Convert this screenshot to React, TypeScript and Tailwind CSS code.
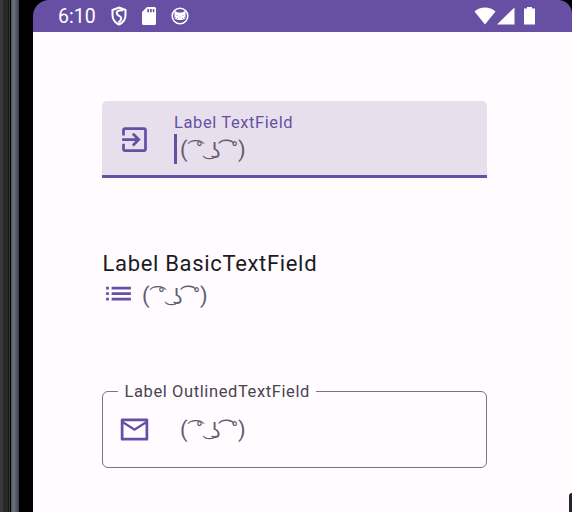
import type { ReactNode } from "react";

function Icon({ children, className = "" }: { children: ReactNode; className?: string }) {
  return (
    <svg viewBox="0 0 24 24" className={"h-[33px] w-[33px] shrink-0 fill-[#6750a4] " + className}>
      {children}
    </svg>
  );
}

function Face() {
  return (
    <span className="flex h-[33px] w-[66px] text-[22px] leading-[33px] whitespace-pre text-[#625b71]">
      <span className="w-[16px] tracking-[-4.5px]">{"( ͡"}</span>
      <span className="-mt-px w-[14px] text-[18px] tracking-[-3.7px]">{"° ͜"}</span>
      <span className="w-[21.5px] pt-px pl-px font-['Noto_Sans',sans-serif] text-[21px] tracking-[1px]">{"ʖ ͡"}</span>
      <span className="-mt-px w-[6.7px] text-[18px]">°</span>
      <span className="w-[8px]">)</span>
    </span>
  );
}

function StatusBar() {
  return (
    <header className="flex h-8 items-center rounded-tl-[16px] rounded-tr-[14px] bg-[#6750a4] pl-[25px] text-white">
      <span className="w-[52px] pt-[2px] text-[19.5px] leading-[30px]">6:10</span>
      <svg viewBox="0 0 18 20" className="h-5 w-[18px] fill-none stroke-white stroke-2">
        <path d="M9 1.5 L15.5 4 V9 C15.5 13.5 12.8 16.8 9 18.5 C5.2 16.8 2.5 13.5 2.5 9 V4 Z" />
        <path d="M13 4.5 C9 3.5 6 5.5 7 8 C8 10 11 10 11.3 12.2 C11.5 14.5 9.5 15.5 8.5 16.5" />
      </svg>
      <svg viewBox="0 0 14 18" className="ml-[14px] h-[18px] w-[14px] fill-white">
        <path fillRule="evenodd" d="M5 0 H12.5 Q14 0 14 1.5 V16.5 Q14 18 12.5 18 H1.5 Q0 18 0 16.5 V5 Z M5.3 2 V5.3 H7 V2 Z M8 2 V5.3 H9.7 V2 Z M10.8 2 V5.3 H12.3 V2 Z" />
      </svg>
      <svg viewBox="0 0 18 18" className="ml-[15px] h-[18px] w-[18px]">
        <circle cx="9" cy="9" r="7.8" className="fill-none stroke-white stroke-[1.6]" />
        <path className="fill-white" d="M3.5 3.5 L6.7 5.5 H11.3 L14.5 3.5 V8 V11 C13 13.7 5 13.7 3.5 11 Z" />
        <path className="fill-[#a596cb]" d="M5.5 8h1v1h-1z M11.5 8h1v1h-1z M8.5 9.5h1v1h-1z M6 11h1v1h-1z M11 11h1v1h-1z M4 10h1v1h-1z M13 10h1v1h-1z" />
      </svg>
      <svg viewBox="0 0 62 20" className="ml-auto mr-[36px] h-5 w-[62px] fill-white">
        <path d="M0.5 5.5 C6 .1 16 .1 21.5 5.5 L11 18.5 Z" />
        <path d="M23 18.5 L40.5 1.5 V18.5 Z" />
        <path d="M50 2.5 H53 V1 H58 V2.5 H61 V18.5 H50 Z" />
      </svg>
    </header>
  );
}

export default function App() {
  return (
    <div className="flex h-[512px] w-[572px] overflow-hidden bg-black font-['Roboto',sans-serif]">
      <aside className="flex w-[33px] shrink-0">
        <div className="w-[3px] bg-[#3b3a3a]" />
        <div className="w-[5px] bg-[#292929]" />
        <div className="w-px bg-[#171717]" />
        <div className="w-px bg-[#383839]" />
        <div className="w-px bg-black" />
        <div className="w-[3px] bg-linear-to-r from-[#4a4d53] to-[#777c85]" />
        <div className="w-[5px] bg-linear-to-r from-[#696f79] to-[#3b4049]" />
      </aside>
      <main className="relative min-w-0 flex-1">
        <StatusBar />
        <div className="flex h-[480px] flex-col bg-[#fffbff] pt-[69px] pl-[69px]">
          <section className="flex h-[77px] w-[385px] items-center rounded-t-[5px] border-b-[3px] border-[#6750a4] bg-[#e7e0ec] pl-4">
            <Icon className="mt-[3px]">
              <path d="M10.09 15.59 11.5 17l5-5-5-5-1.41 1.41L12.67 11H3v2h9.67l-2.58 2.59zM19 3H5c-1.11 0-2 .9-2 2v4h2V5h14v14H5v-4H3v4c0 1.1.89 2 2 2h14c1.1 0 2-.9 2-2V5c0-1.1-.9-2-2-2z" />
            </Icon>
            <div className="ml-[23px] h-[52px]">
              <div className="h-[22px] text-[16.5px] leading-[22px] tracking-[0.6px] text-[#6750a4]">Label TextField</div>
              <div className="flex h-[30px] items-center">
                <span className="h-[30px] w-[3px] bg-[#6750a4]" />
                <span className="ml-[3px]"><Face /></span>
              </div>
            </div>
          </section>
          <section className="mt-[69px] w-[385px]">
            <h1 className="h-[32px] pt-px pl-[0.5px] text-[22px] leading-[32px] font-normal tracking-[0.67px] text-[#1c1b1f]">Label BasicTextField</h1>
            <div className="flex h-[33px] items-center">
              <Icon className="-mt-[4px]">
                <path d="M3 13h2v-2H3v2zm0 4h2v-2H3v2zm0-8h2V7H3v2zm4 4h14v-2H7v2zm0 4h14v-2H7v2zM7 7v2h14V7H7z" />
              </Icon>
              <span className="ml-[7px]"><Face /></span>
            </div>
          </section>
          <fieldset className="mt-[68px] h-[88px] w-[385px] rounded-[6px] border-[1.5px] border-[#79747e] pl-[15px]">
            <legend className="h-[22px] px-[6.5px] pt-px text-[16.5px] leading-[22px] tracking-[0.6px] text-[#49454f]">Label OutlinedTextField</legend>
            <div className="flex h-[54px] items-center">
              <Icon>
                <path d="M22 5c0-.6-.4-1-1-1H3c-.6 0-1 .4-1 1v14c0 .6.4 1 1 1h18c.6 0 1-.4 1-1V5zm-2 1-8 5-8-5h16zm0 12H4V8l8 5 8-5v10z" />
              </Icon>
              <span className="ml-[29px]"><Face /></span>
            </div>
          </fieldset>
        </div>
        <span className="absolute right-0 bottom-0 h-[19px] w-[3px] rounded-tl-[3px] bg-[#252529]" />
      </main>
    </div>
  );
}
